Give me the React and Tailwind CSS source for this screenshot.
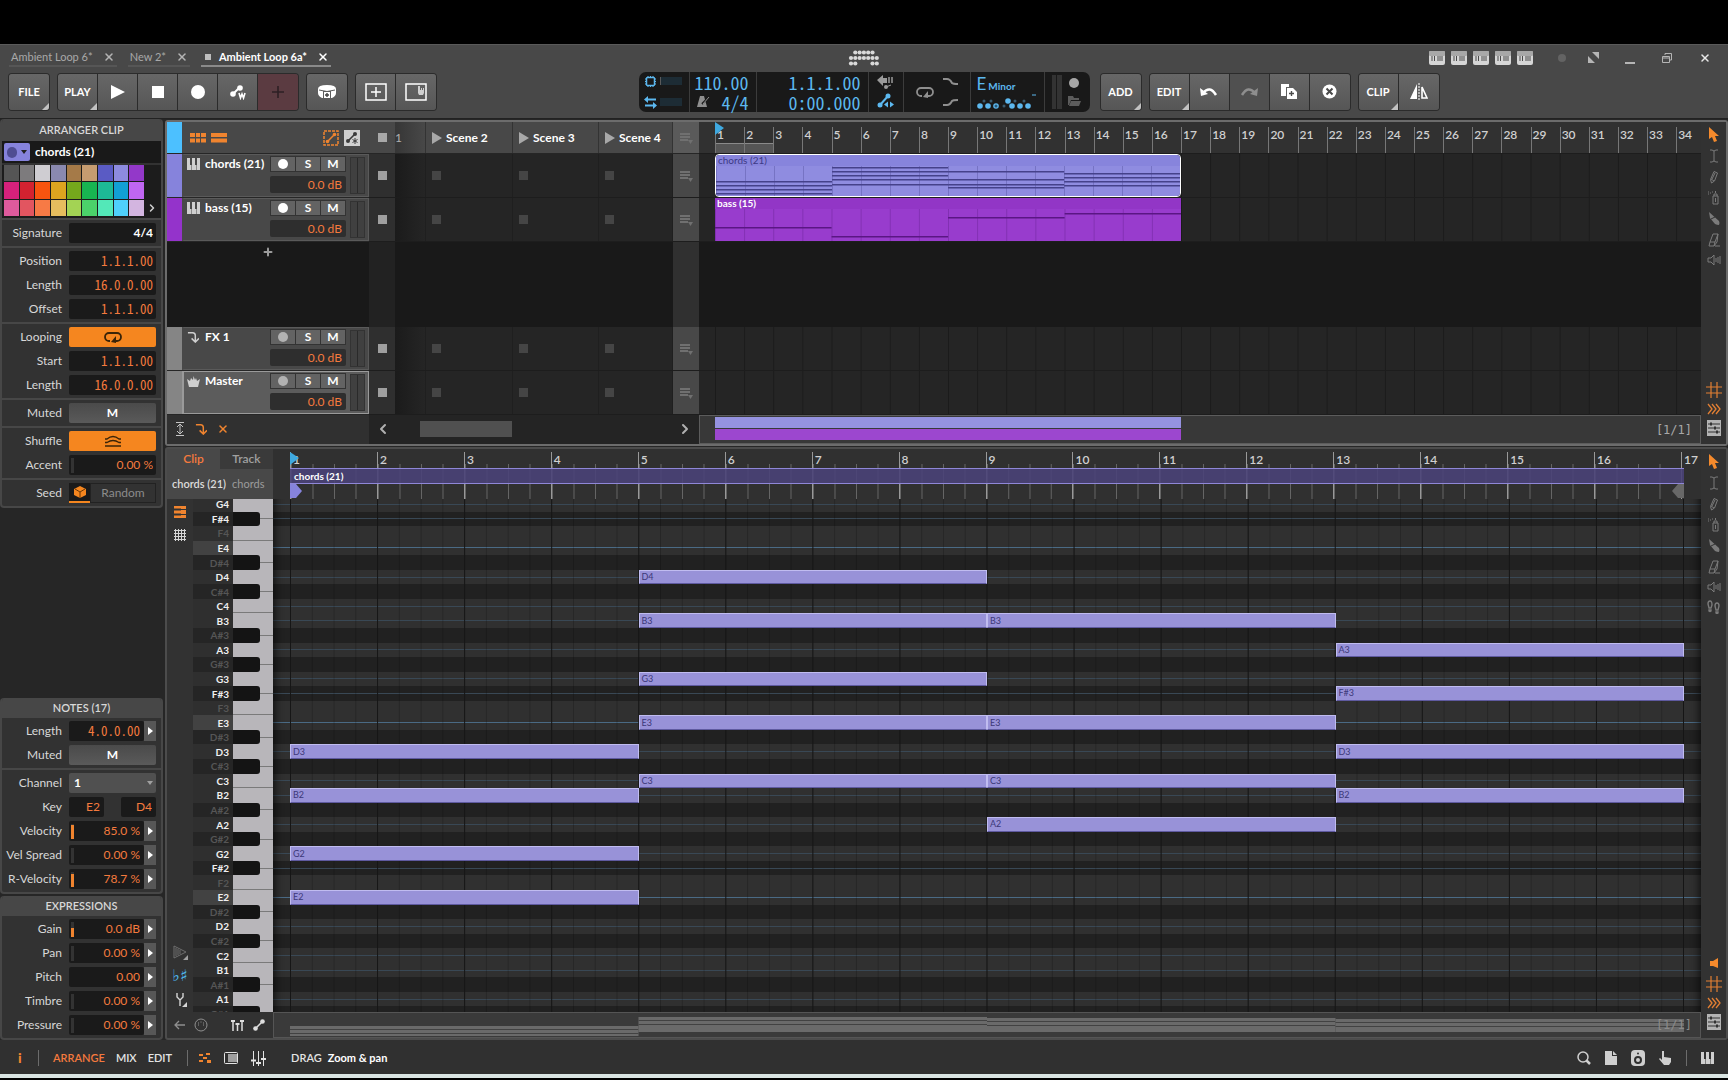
import React from "react";
import clsx from "clsx";
import { LuPlus, LuX, LuChevronLeft, LuChevronRight } from "react-icons/lu";

const VISIBLE_BARS = 33.84;
const BAR = 100 / VISIBLE_BARS;
const MONO = "font-['Noto_Sans_Mono_CJK_SC','Noto_Sans_CJK_SC',sans-serif] [font-feature-settings:'hwid']";

const PALETTE = [
  "#555555", "#7d7b7d", "#cfcdd2", "#8a89b0", "#a57a48", "#c69c70", "#5a5bc4", "#8d8bdf", "#9338c9",
  "#d6217b", "#d32230", "#f7540f", "#dca41f", "#75a81c", "#18b551", "#1dba96", "#12a0d4", "#c066f2",
  "#de5a9c", "#e25560", "#f77a45", "#e6bd5e", "#a3d354", "#4bd26a", "#53e8b8", "#4fd0fb", "#d3b5e0",
];

const KEYS = [
  "G4", "F#4", "F4", "E4", "D#4", "D4", "C#4", "C4", "B3", "A#3", "A3", "G#3",
  "G3", "F#3", "F3", "E3", "D#3", "D3", "C#3", "C3", "B2", "A#2", "A2", "G#2",
  "G2", "F#2", "F2", "E2", "D#2", "D2", "C#2", "C2", "B1", "A#1", "A1", "G#1",
];
const SCALE = ["E", "F#", "G", "A", "B", "C", "D"];

const NOTES = [
  ["D3", 1], ["B2", 1], ["G2", 1], ["E2", 1],
  ["D4", 5], ["B3", 5], ["G3", 5], ["E3", 5], ["C3", 5],
  ["B3", 9], ["E3", 9], ["C3", 9], ["A2", 9],
  ["A3", 13], ["F#3", 13], ["D3", 13], ["B2", 13],
];

const CHORD_LINES = [
  [15, 19, 23, 27],
  [1, 5, 9, 13, 18],
  [5, 13, 18, 21],
  [7, 11, 15, 19],
];
const BASS_LINES = [[18], [27], [8], [4]];

/* ---------- icons ---------- */

const Icon = ({ w = 16, h = 16, className, children }) => (
  <svg
    width={w}
    height={h}
    viewBox={`0 0 ${w} ${h}`}
    fill="none"
    stroke="currentColor"
    className={clsx("shrink-0", className)}
    aria-hidden="true"
  >
    {children}
  </svg>
);

const LoopIcon = ({ className }) => (
  <Icon w={18} h={12} className={className}>
    <path d="M6 10H5a4 4 0 0 1-4-4 4 4 0 0 1 4-4h8a4 4 0 0 1 4 4 4 4 0 0 1-4 4h-2" strokeWidth="1.800" />
    <path d="M12 5v7L7 11z" fill="currentColor" stroke="none" />
  </Icon>
);

const PianoIcon = ({ className }) => (
  <Icon w={13} h={12} className={className}>
    <path d="M0 0h3v7h1v5H0zM5 7h0V0h3v7h1v5H4.500V7zM10 0h3v12H9.500V7h.5z" fill="currentColor" stroke="none" />
  </Icon>
);

const PointerIcon = () => (
  <Icon w={12} h={15} className="text-[#f58a2c]">
    <path d="M1 0v12l3-2 2 5 3-1-2-5h4z" fill="currentColor" stroke="none" />
  </Icon>
);
const BeamIcon = () => (
  <Icon w={10} h={14}>
    <path d="M1 1h2l2 1 2-1h2M5 2v10M1 13h2l2-1 2 1h2" />
  </Icon>
);
const PencilIcon = () => (
  <Icon w={12} h={14}>
    <path d="M6 1.500l3.500 1.500-3 8-3 2-1-3.500zM3 9l3 2M7 3l-3 6" />
  </Icon>
);
const SprayIcon = () => (
  <Icon w={14} h={14}>
    <path d="M6 5h5v8H6zM7 5V3h3v2M8.500 7v4M8.500 2V0" />
    <path d="M1 1h1M3 2h1M1 3h1M5 1h1" />
  </Icon>
);
const KnifeIcon = () => (
  <Icon w={12} h={14}>
    <path d="M1 0l10 9q1 2 0 4-2 0-4-1L2 6z" fill="currentColor" stroke="none" />
    <path d="M3 7l4-2" stroke="#323232" />
  </Icon>
);
const EraserIcon = () => (
  <Icon w={12} h={14}>
    <path d="M5 1h5l-1 8-3 4H1l1-4zM2 9h5l3-8M7 9l-1 4M7 13h5" />
  </Icon>
);
const SpeakerIcon = () => (
  <Icon w={14} h={12}>
    <path d="M1 4h3l3-3v10L4 8H1z" />
    <path d="M9 4v4M11 3v6M13 2v8" />
  </Icon>
);
const FeetIcon = () => (
  <Icon w={13} h={14}>
    <path d="M1 4q0-3 2-3t2 4l-1 3H2zM2 10h2v1q-1 1-2 0zM8 6q0-3 2-3t2 3l-1 4H9zM9 12h2v1q-1 1-2 0z" strokeWidth="1.400" />
  </Icon>
);
const GridIcon = () => (
  <Icon w={16} h={16} className="text-[#e27f33]">
    <path d="M5 0v16M11 0v16M0 5h16M0 11h16" strokeWidth="1.200" />
  </Icon>
);
const ChevronsIcon = () => (
  <Icon w={14} h={12} className="text-[#e27f33]">
    <path d="M1 1l4 5-4 5M5 1l4 5-4 5M9 1l4 5-4 5" strokeWidth="1.300" />
  </Icon>
);
const MixIcon = () => (
  <Icon w={16} h={16} className="text-[#b4b4b4]">
    <path d="M1 0h14v16H1z" fill="currentColor" stroke="none" />
    <path d="M2 4h12M2 8h12M2 12h12" stroke="#333" />
    <path d="M5 2.500v3M9 6.500v3M11 10.500v3" stroke="#333" strokeWidth="2" />
  </Icon>
);
const SceneMenuIcon = () => (
  <Icon w={14} h={12} className="text-[#707070]">
    <path d="M1 2h10M1 5h10M1 8h8" strokeWidth="2" />
    <path d="M9 8h5l-2.500 4z" fill="currentColor" stroke="none" />
  </Icon>
);
const ReturnIcon = ({ className }) => (
  <Icon w={13} h={13} className={className}>
    <path d="M1 2h5q3 0 3 3v6M5 8l4 4 4-4" strokeWidth="1.600" />
  </Icon>
);
const CrownIcon = ({ className }) => (
  <Icon w={13} h={11} className={className}>
    <path d="M0 3l3 2 1-3 2 2 .5-4L8 4l1-2 1 3 3-2-2 8H2z" fill="currentColor" stroke="none" />
  </Icon>
);
const LogoIcon = () => {
  const dots = [[1, 2, 3, 4, 5], [0, 1, 2, 3, 4, 5, 6], [0, 1, 5, 6]];
  return (
    <Icon w={32} h={16}>
      {dots.map((r, y) =>
        r.map((x) => <circle key={`${x}-${y}`} cx={3 + x * 4.3} cy={2.500 + y * 5.500} r="2.100" fill="#d9d9d9" stroke="none" />)
      )}
    </Icon>
  );
};

/* ---------- header ---------- */

const ProjectTab = ({ title, active }) => (
  <div
    className={clsx(
      "flex h-[19px] items-center gap-[10px] border-b-2 px-[2px] text-[11px]",
      active ? "border-[#8a8a8a] font-bold text-white" : "border-[#565656] text-[#a8a8a8]"
    )}
  >
    <button className="flex items-center gap-2">
      {active && <span className="ml-[2px] h-[6px] w-[6px] bg-[#bdbdbd]" />}
      {title}
    </button>
    <button aria-label={`Close ${title}`}>
      <LuX className={clsx("h-3 w-3", active ? "text-white" : "text-[#b4b4b4]")} strokeWidth={3} />
    </button>
  </div>
);

const ToolGroup = ({ children }) => (
  <div className="flex h-[36px] divide-x divide-[#2b2b2b] overflow-hidden rounded-[3px] ring-1 ring-[#2b2b2b]">
    {children}
  </div>
);

const ToolButton = ({ label, menu, className, children }) => (
  <button
    aria-label={label}
    className={clsx(
      "relative flex w-10 items-center justify-center text-[11px] font-bold",
      className || "bg-linear-to-b from-[#676767] to-[#565656] text-white"
    )}
  >
    {children}
    {menu && (
      <span className="absolute right-0 bottom-0 border-b-[7px] border-l-[7px] border-b-[#c2c2c2] border-l-transparent" />
    )}
  </button>
);

const Lcd = () => (
  <div className="flex h-10 w-[451px] divide-x divide-[#3c3c3c] rounded-[7px] bg-[#191919] text-[#5cb8ef]">
    <div className="grid w-[51px] grid-cols-[12px_22px] content-center gap-x-1 gap-y-2 pl-[5px]">
      <Icon w={13} h={13}>
        <rect x="2.500" y="2.500" width="8" height="8" rx="1" strokeWidth="1.500" />
        <path d="M1 4h1M1 6.500h1M1 9h1M11 4h1M11 6.500h1M11 9h1M4 1v1M6.500 1v1M9 1v1M4 11v1M6.500 11v1M9 11v1" />
      </Icon>
      <span className="h-2 self-center border-l border-[#5a5a5a] bg-[#1d2c35]" />
      <Icon w={13} h={13}>
        <path d="M3 3.500h9M1 9.500h9" strokeWidth="1.800" />
        <path d="M0 3.500L4 0v7zM13 9.500L9 6v7z" fill="currentColor" stroke="none" />
      </Icon>
      <span className="h-2 self-center bg-[#1d2c35]" />
    </div>
    <div className="flex w-[67px] flex-col items-end justify-center pr-[7px]">
      <span className={clsx(MONO, "text-[18px] leading-5")}>110.00</span>
      <span className="flex items-center gap-3">
        <Icon w={14} h={11} className="text-[#8f8f8f]">
          <path d="M4 0h4l3 11H1z" fill="currentColor" stroke="none" />
          <path d="M6 8l7-7" stroke="#191919" strokeWidth="2" />
          <path d="M7 8l6-7" />
        </Icon>
        <span className={clsx(MONO, "text-[18px] leading-5")}>4/4</span>
      </span>
    </div>
    <div className={clsx(MONO, "flex w-[112px] flex-col items-end justify-center pr-[7px] text-[18px] leading-5")}>
      <span>1.1.1.00</span>
      <span>0:00.000</span>
    </div>
    <div className="flex w-[35px] flex-col items-center justify-center gap-1">
      <Icon w={17} h={14} className="text-[#9a9a9a]">
        <path d="M0 5l6-5v3h4v5H6v3z" fill="currentColor" stroke="none" />
        <path d="M12 2v6M15 2v6" strokeWidth="1.500" />
        <circle cx="9" cy="12" r="2" fill="currentColor" stroke="none" />
        <path d="M9 12l5-2" />
      </Icon>
      <Icon w={17} h={15}>
        <path d="M3 12l8-9" strokeWidth="2" />
        <circle cx="3" cy="12" r="2.500" fill="currentColor" stroke="none" />
        <circle cx="11" cy="3" r="2.500" fill="currentColor" stroke="none" />
        <path d="M7 11.500l4-3v6zM17 11.500l-4-3v6z" fill="currentColor" stroke="none" />
      </Icon>
    </div>
    <div className="flex w-[67px] items-center justify-center gap-[9px] text-[#8f8f8f]">
      <LoopIcon />
      <div className="flex flex-col gap-[10px]">
        <Icon w={15} h={10}>
          <path d="M0 2h4q3 0 5 4 1 1 6 1" strokeWidth="2" />
        </Icon>
        <Icon w={15} h={10}>
          <path d="M0 8h4q3 0 5-4 1-1 6-1" strokeWidth="2" />
        </Icon>
      </div>
    </div>
    <div className="flex w-[74px] flex-col pt-1 pl-[6px]">
      <div className="flex items-baseline gap-[2px] leading-4">
        <span className="text-[17px]">E</span>
        <span className="text-[10px] font-bold">Minor</span>
      </div>
      <Icon w={62} h={18}>
        {[3, 11, 19, 35, 43, 51].map((x) => (
          <circle key={x} cx={x} cy="12" r="2.800" fill="currentColor" stroke="none" />
        ))}
        <circle cx="19" cy="12" r="1.500" fill="#2a5877" stroke="none" />
        <circle cx="31" cy="7" r="2.800" fill="currentColor" stroke="none" />
        {[7, 14, 38, 47].map((x) => (
          <circle key={x} cx={x} cy="7" r="1.500" fill="#3a5a6e" stroke="none" />
        ))}
        <circle cx="27" cy="12" r="1.500" fill="#3a5a6e" stroke="none" />
        <path d="M55 1h4" />
      </Icon>
    </div>
    <div className="flex flex-1 items-center gap-[5px] pl-[7px]">
      <span className="flex h-[34px] w-[10px] gap-px bg-[#191919]">
        <span className="flex-1 bg-[#333]" />
        <span className="flex-1 bg-[#333]" />
      </span>
      <span className="flex flex-col items-center gap-2">
        <span className="h-[10px] w-[10px] rounded-full bg-[#a6a6a6]" />
        <Icon w={14} h={10} className="text-[#5c5c5c]">
          <path d="M1 0h5l1 2h5v2H4l-2 5H1zM4 5h10l-2 5H2z" fill="currentColor" stroke="none" />
        </Icon>
      </span>
    </div>
  </div>
);

const Header = () => (
  <header className="flex h-[75px] flex-col border-b border-[#222] bg-[#484848]">
    <div className="grid h-[26px] grid-cols-[1fr_auto_1fr] items-center border-t border-[#5a5a5a]">
      <div className="flex gap-[11px] pl-[9px]">
        <ProjectTab title="Ambient Loop 6*" />
        <ProjectTab title="New 2*" />
        <ProjectTab title="Ambient Loop 6a*" active />
      </div>
      <LogoIcon />
      <div className="flex items-center justify-end pr-[17px]">
        <div className="mr-[25px] flex gap-[6px]">
          {[1, 2, 3, 4, 5].map((n) => (
            <Icon key={n} w={16} h={14}>
              <rect width="16" height="14" rx="2" fill="#d6d6d6" stroke="none" />
              <rect width="16" height="5" rx="1" fill="#a8a8a8" stroke="none" />
              <path d="M3 5v5M5.500 5v5M9 5v5M11 5v5M13 5v5" stroke="#4a4a4a" />
            </Icon>
          ))}
        </div>
        <span className="mr-[22px] h-2 w-2 rounded-full bg-[#636363]" />
        <button aria-label="Full screen" className="mr-[26px]">
          <Icon w={11} h={11} className="text-[#b5b5b5]">
            <path d="M0 4v7h7zM11 7V0H4z" fill="currentColor" stroke="none" />
          </Icon>
        </button>
        <button aria-label="Minimize" className="mr-[27px] h-3 w-[10px] border-b-2 border-[#b5b5b5]" />
        <button aria-label="Restore" className="mr-[27px]">
          <Icon w={10} h={10} className="text-[#b5b5b5]">
            <path d="M3 2V.5h6.500V7H8M.5 3.500h7v6h-7zM.5 5h7" />
          </Icon>
        </button>
        <button aria-label="Close">
          <LuX className="h-3 w-3 text-[#e8e8e8]" strokeWidth={3} />
        </button>
      </div>
    </div>
    <div className="grid flex-1 grid-cols-[1fr_auto_1fr] items-center pb-[5px]">
      <div className="flex gap-[9px] pl-[9px]">
        <ToolGroup>
          <ToolButton menu>FILE</ToolButton>
        </ToolGroup>
        <ToolGroup>
          <ToolButton menu>PLAY</ToolButton>
          <ToolButton label="Start">
            <Icon w={14} h={14}>
              <path d="M0 0l14 7-14 7z" fill="currentColor" stroke="none" />
            </Icon>
          </ToolButton>
          <ToolButton label="Stop">
            <span className="h-3 w-3 bg-white" />
          </ToolButton>
          <ToolButton label="Record">
            <span className="h-[14px] w-[14px] rounded-full bg-white" />
          </ToolButton>
          <ToolButton label="Automation write">
            <Icon w={16} h={16}>
              <path d="M3 10l6-6" strokeWidth="2" />
              <circle cx="3" cy="10" r="2.800" fill="currentColor" stroke="none" />
              <circle cx="10" cy="4" r="2.800" fill="currentColor" stroke="none" />
              <path d="M9 9l1.500 5 1.500-4 1.500 4L15 9" strokeWidth="1.600" />
            </Icon>
          </ToolButton>
          <ToolButton label="Overdub" className="bg-[#5b3b41] text-[#2e2024]">
            <Icon w={12} h={12}>
              <path d="M6 0v12M0 6h12" strokeWidth="1.600" />
            </Icon>
          </ToolButton>
        </ToolGroup>
        <ToolGroup>
          <ToolButton label="Capture">
            <Icon w={18} h={16}>
              <path d="M0 5q0-4 9-4t9 4v4q0 3-4 5H4q-4-2-4-5z" fill="currentColor" stroke="none" />
              <path d="M1 6q8 3 16 0" stroke="#5c5c5c" />
              <rect x="5.500" y="7.500" width="7" height="7" fill="#fff" stroke="#5c5c5c" />
              <path d="M9 9v4M7 11h4" stroke="#444" strokeWidth="1.400" />
            </Icon>
          </ToolButton>
        </ToolGroup>
        <ToolGroup>
          <ToolButton label="Add panel">
            <Icon w={22} h={18}>
              <path d="M1 1h20v16H1zM11 4v10M6 9h10" strokeWidth="1.500" />
            </Icon>
          </ToolButton>
          <ToolButton label="Touch panel">
            <Icon w={22} h={18}>
              <path d="M1 1h20v16H1z" strokeWidth="1.500" />
              <path d="M13 3h2v4h1V5h1v2h1V5h1v5l-1 2h-4l-1-2z" fill="#cfcfcf" stroke="none" />
            </Icon>
          </ToolButton>
        </ToolGroup>
      </div>
      <Lcd />
      <div className="flex gap-[9px] pl-[11px]">
        <ToolGroup>
          <ToolButton menu>ADD</ToolButton>
        </ToolGroup>
        <ToolGroup>
          <ToolButton menu>EDIT</ToolButton>
          <ToolButton label="Undo">
            <Icon w={18} h={12}>
              <path d="M3 7q7-8 13 2" strokeWidth="2.500" />
              <path d="M0 2l1 8 7-2z" fill="currentColor" stroke="none" />
            </Icon>
          </ToolButton>
          <ToolButton label="Redo" className="bg-[#505050] text-[#8e8e8e]">
            <Icon w={18} h={12}>
              <path d="M15 7Q8-1 2 9" strokeWidth="2.500" />
              <path d="M18 2l-1 8-7-2z" fill="currentColor" stroke="none" />
            </Icon>
          </ToolButton>
          <ToolButton label="Duplicate">
            <Icon w={16} h={15}>
              <path d="M0 0h8v3H5v9H0z" fill="currentColor" stroke="none" />
              <path d="M6 4h6l4 4v7H6z" fill="currentColor" stroke="none" />
              <path d="M10.500 7v5M8 9.500h5" stroke="#4a4a4a" strokeWidth="1.400" />
            </Icon>
          </ToolButton>
          <ToolButton label="Delete">
            <Icon w={15} h={15}>
              <circle cx="7.500" cy="7.500" r="7" fill="currentColor" stroke="none" />
              <path d="M4.500 4.500l6 6M10.500 4.500l-6 6" stroke="#4a4a4a" strokeWidth="2" />
            </Icon>
          </ToolButton>
        </ToolGroup>
        <ToolGroup>
          <ToolButton menu>CLIP</ToolButton>
          <ToolButton label="Reverse">
            <Icon w={18} h={17}>
              <path d="M7 1v15H0z" fill="currentColor" stroke="none" />
              <path d="M9 0v17" strokeDasharray="2 1" />
              <path d="M12 4v11h5z" strokeWidth="1.600" />
            </Icon>
          </ToolButton>
        </ToolGroup>
      </div>
    </div>
  </header>
);

/* ---------- inspector ---------- */

const Panel = ({ title, small, className, children }) => (
  <section className={clsx("overflow-hidden rounded-[4px] border-x-2 border-b-2 border-[#474747] bg-[#323232]", className)}>
    <h2
      className={clsx(
        "flex items-center justify-center bg-[#474747] text-[11px] font-semibold text-[#d8d8d8]",
        small ? "h-5" : "h-[22px]"
      )}
    >
      {title}
    </h2>
    {children}
  </section>
);

const Section = ({ first, children }) => (
  <div className={clsx("flex flex-col gap-1 py-[3px] pr-[5px] pl-[3px]", !first && "border-t-2 border-[#474747]")}>{children}</div>
);

const Row = ({ label, htmlFor, children }) => (
  <div className="flex h-5 items-center gap-[7px]">
    <label htmlFor={htmlFor} className="flex-1 text-right text-[12px] whitespace-nowrap text-[#d8d8d8]">
      {label}
    </label>
    <div className="flex h-5 w-[87px] items-stretch">{children}</div>
  </div>
);

// bar: fill height of the little level bar, in percent
const Field = ({ id, label, value, mono, bar, arrow, white }) => (
  <Row label={label} htmlFor={id}>
    <div className="flex min-w-0 flex-1 items-center rounded-[2px] bg-[#1a1a1a]">
      {bar !== undefined && (
        <span className="ml-[2px] flex h-[15px] w-[3px] shrink-0 items-end bg-[#333]">
          <span className="w-full bg-[#f0842f]" style={{ height: `${bar}%` }} />
        </span>
      )}
      <input
        id={id}
        defaultValue={value}
        className={clsx(
          "w-full min-w-0 bg-transparent text-right outline-none",
          white ? "font-bold text-white" : "text-[#f57a3e]",
          mono ? MONO : "",
          mono ? "text-[13px]" : "text-[12px]",
          arrow ? "pr-1" : "pr-[3px]"
        )}
      />
    </div>
    {arrow && (
      <button aria-label={`${label} options`} className="flex w-3 items-center justify-center bg-[#575757]">
        <span className="border-y-4 border-l-[5px] border-y-transparent border-l-white" />
      </button>
    )}
  </Row>
);

const MuteRow = ({ id }) => (
  <Row label="Muted" htmlFor={id}>
    <button id={id} className="flex-1 rounded-[2px] bg-linear-to-b from-[#4a4a4a] to-[#5a5a5a] text-[12px] font-bold text-white">
      M
    </button>
  </Row>
);

const Inspector = () => (
  <aside className="flex w-[163px] shrink-0 flex-col bg-[#262626]">
    <Panel title="ARRANGER CLIP">
      <div className="flex h-[22px] items-center gap-[5px] bg-[#191919] px-[2px]">
        <button aria-label="Clip color" className="flex h-[18px] w-[26px] items-center justify-center gap-1 rounded-[2px] bg-[#8683dc]">
          <span className="h-[11px] w-[10px] rounded-full bg-[#4f4d93]" />
          <span className="border-x-[3px] border-t-4 border-x-transparent border-t-[#222]" />
        </button>
        <input aria-label="Clip name" defaultValue="chords (21)" className="w-24 bg-transparent text-[12px] font-bold text-white outline-none" />
      </div>
      <div className="mt-[2px] flex h-[53px] items-end bg-[#1c1c1c] pl-[2px]">
        <div className="grid h-full w-[140px] grid-cols-9 grid-rows-3 gap-px pb-[2px]">
          {PALETTE.map((c) => (
            <button key={c} aria-label={c} style={{ backgroundColor: c }} />
          ))}
        </div>
        <LuChevronRight className="mb-1 h-3 w-4 text-[#d0d0d0]" strokeWidth={3} />
      </div>
      <Section>
        <Field id="sig" label="Signature" value="4/4" white />
      </Section>
      <Section>
        <Field id="pos" label="Position" value="1.1.1.00" mono />
        <Field id="len" label="Length" value="16.0.0.00" mono />
        <Field id="off" label="Offset" value="1.1.1.00" mono />
      </Section>
      <Section>
        <Row label="Looping" htmlFor="looping">
          <button id="looping" className="flex flex-1 items-center justify-center rounded-[2px] bg-[#f5861f] text-[#3b2408]">
            <LoopIcon />
          </button>
        </Row>
        <Field id="lstart" label="Start" value="1.1.1.00" mono />
        <Field id="llen" label="Length" value="16.0.0.00" mono />
      </Section>
      <Section>
        <MuteRow id="clipmute" />
      </Section>
      <Section>
        <Row label="Shuffle" htmlFor="shuffle">
          <button id="shuffle" className="flex flex-1 items-center justify-center rounded-[2px] bg-[#f5861f] text-[#3b2408]">
            <Icon w={16} h={12}>
              <path d="M0 4h2q6-5 12 0h2M0 7.500h2q6-4 12 0h2M0 11h16" strokeWidth="1.300" />
            </Icon>
          </button>
        </Row>
        <Field id="accent" label="Accent" value="0.00 %" bar={0} />
      </Section>
      <Section>
        <Row label="Seed" htmlFor="seed">
          <button id="seed" aria-label="Seed" className="flex w-[21px] items-center justify-center border-b-2 border-[#f5861f] bg-[#1a1a1a]">
            <Icon w={12} h={12} className="text-[#f5861f]">
              <path d="M6 0l6 3v6l-6 3-6-3V3z" fill="currentColor" stroke="none" />
              <path d="M1 3l5 3 5-3M6 6v6" stroke="#6b3706" />
            </Icon>
          </button>
          <button className="flex-1 border border-[#222] text-[12px] text-[#8c8c8c]">Random</button>
        </Row>
      </Section>
    </Panel>

    <div className="flex-1" />

    <Panel title="NOTES (17)" small>
      <Section first>
        <Field id="nlen" label="Length" value="4.0.0.00" mono arrow />
        <MuteRow id="notemute" />
      </Section>
      <Section>
        <Row label="Channel" htmlFor="channel">
          <div className="relative flex flex-1">
            <select id="channel" className="flex-1 appearance-none rounded-[2px] bg-[#505050] pl-[5px] text-[12px] font-bold text-white">
              <option>1</option>
            </select>
            <span className="pointer-events-none absolute top-2 right-[3px] border-x-[3px] border-t-4 border-x-transparent border-t-[#a0a0a0]" />
          </div>
        </Row>
        <Row label="Key" htmlFor="keylo">
          <input id="keylo" defaultValue="E2" className="w-[35px] rounded-[2px] bg-[#1a1a1a] pr-1 text-right text-[12px] text-[#f57a3e]" />
          <span className="flex-1" />
          <input aria-label="Highest key" defaultValue="D4" className="w-[35px] rounded-[2px] bg-[#1a1a1a] pr-1 text-right text-[12px] text-[#f57a3e]" />
        </Row>
        <Field id="vel" label="Velocity" value="85.0 %" bar={90} arrow />
        <Field id="vspr" label="Vel Spread" value="0.00 %" bar={0} arrow />
        <Field id="rvel" label="R-Velocity" value="78.7 %" bar={85} arrow />
      </Section>
    </Panel>
    <Panel title="EXPRESSIONS" small className="mt-[2px]">
      <Section first>
        <Field id="gain" label="Gain" value="0.0 dB" bar={60} arrow />
        <Field id="pan" label="Pan" value="0.00 %" bar={0} arrow />
        <Field id="pitch" label="Pitch" value="0.00" arrow />
        <Field id="timbre" label="Timbre" value="0.00 %" bar={0} arrow />
        <Field id="pressure" label="Pressure" value="0.00 %" bar={0} arrow />
      </Section>
    </Panel>
  </aside>
);

/* ---------- arranger ---------- */

const TrackHeader = ({ name, color, icon, armed, selected }) => (
  <div className="flex h-11 w-[202px] border-b border-[#262626]">
    <span className="w-[15px]" style={{ backgroundColor: color }} />
    <div
      className={clsx(
        "flex flex-1 border border-l-2 pl-[3px]",
        selected ? "border-[#9a9a9a] bg-[#5c5c5c]" : "border-[#5a5a5a] border-l-[#484848] bg-[#484848]"
      )}
    >
      <div className="flex w-[83px] items-start gap-[5px] pt-px">
        <span className="flex h-4 w-[13px] items-center text-[#cfcfcf]">{icon}</span>
        <span className="text-[12px] leading-4 font-bold whitespace-nowrap text-white">{name}</span>
      </div>
      <div className="flex w-[76px] flex-col gap-1 pt-px">
        <div className="flex h-4 divide-x divide-[#333] border border-[#333]">
          <button aria-label={`Arm ${name}`} className="flex flex-1 items-center justify-center bg-[#636363]">
            <span className={clsx("h-[10px] w-[10px] rounded-full", armed ? "bg-white" : "bg-[#b2b2b2]")} />
          </button>
          <button aria-label={`Solo ${name}`} className="flex-1 bg-[#636363] text-[12px] leading-[14px] font-bold text-white">S</button>
          <button aria-label={`Mute ${name}`} className="flex-1 bg-[#636363] text-[12px] leading-[14px] font-bold text-white">M</button>
        </div>
        <div className="h-[17px] rounded-[2px] bg-[#2e2e2e] pr-1 text-right text-[12px] leading-[17px] text-[#f57a3e]">0.0 dB</div>
      </div>
      <div className="my-[2px] ml-1 flex w-[15px] gap-px border border-[#333] bg-[#2a2a2a]">
        <span className="flex-1 bg-[#404040]" />
        <span className="flex-1 bg-[#404040]" />
      </div>
    </div>
  </div>
);

const COLS = "grid grid-cols-[26px_31px_87px_86px_74px_26px]";

const Slot = () => (
  <div className="flex items-center border-r border-[#1f1f1f] bg-[#252525] pl-[6px]">
    <button aria-label="Stop slot" className="h-[9px] w-[9px] bg-[#454545]" />
  </div>
);

const SlotRow = () => (
  <div className={clsx(COLS, "h-11 border-b border-[#1d1d1d]")}>
    <div className="flex items-center justify-center bg-[#2f2f2f]">
      <button aria-label="Stop track" className="h-[9px] w-[9px] bg-[#9f9f9f]" />
    </div>
    <div className="border-r border-[#1f1f1f] bg-linear-to-r from-[#1b1b1b] to-[#252525]" />
    <Slot />
    <Slot />
    <Slot />
    <div className="flex items-center justify-center bg-[#484848]">
      <SceneMenuIcon />
    </div>
  </div>
);

const SceneHead = ({ name }) => (
  <div className="flex items-center gap-1 border-r border-[#333] bg-[#484848] pl-[6px]">
    <span className="border-y-[6px] border-l-[10px] border-y-transparent border-l-[#a8a8a8]" />
    <span className="text-[12px] font-bold text-white">{name}</span>
  </div>
);

const Clip = ({ name, lines, head, body, line, outline, dark }) => (
  <div
    className={clsx("flex flex-col overflow-hidden [grid-area:1/1]", outline && "rounded-[4px] border border-white")}
    style={{ width: `${16 * BAR}%` }}
  >
    <div className={clsx("h-[11px] pl-[2px] text-[10px] leading-[11px]", head, dark ? "text-[#3d3a86]" : "font-bold text-white")}>{name}</div>
    <div className={clsx("flex-1 bg-[length:6.25%_100%]", body)}>
      <svg className="block h-8 w-full" viewBox="0 0 16 32" preserveAspectRatio="none">
        {lines.map((seg, i) =>
          seg.map((y) => <rect key={`${i}-${y}`} x={i * 4} y={y} width="4" height="1.500" fill={line} />)
        )}
      </svg>
    </div>
  </div>
);

const Lane = ({ children }) => (
  <div className="h-11 overflow-hidden border-b border-[#1d1d1d] bg-[#252525] pl-4">
    <div
      className="grid h-full grid-rows-1 bg-[linear-gradient(to_right,#1b1b1b_1px,transparent_1px)]"
      style={{ backgroundSize: `${BAR}% 100%` }}
    >
      {children}
    </div>
  </div>
);

const Tools = ({ extra }) => (
  <div className="flex w-[25px] shrink-0 flex-col items-center bg-[#323232] pt-[5px] text-[#7b7b7b]">
    <div className="flex flex-col items-center gap-[7px]">
      <PointerIcon />
      <BeamIcon />
      <PencilIcon />
      <SprayIcon />
      <KnifeIcon />
      <EraserIcon />
      <SpeakerIcon />
      {extra && <FeetIcon />}
    </div>
    <div className="mt-auto flex flex-col items-center gap-[5px] pb-2">
      {extra && (
        <Icon w={10} h={11} className="mb-[2px] text-[#f58a2c]">
          <path d="M1 3h3l5-3v10L4 8H1z" fill="currentColor" stroke="none" />
        </Icon>
      )}
      <GridIcon />
      <ChevronsIcon />
      <MixIcon />
    </div>
  </div>
);

const PlayMarker = () => (
  <Icon w={9} h={13} className="text-[#3fa9e0]">
    <path d="M0 0l9 6-9 7z" fill="currentColor" stroke="none" />
  </Icon>
);

const Arranger = () => (
  <section className="mt-px flex rounded-[3px] border-2 border-[#6c6c6c] bg-[#191919]">
    <div className="flex w-[202px] shrink-0 flex-col">
      <div className="flex h-8 border-b border-[#262626] bg-[#484848]">
        <span className="w-[15px] bg-[#4cc0ff]" />
        <div className="flex flex-1 items-center gap-[5px] pr-[9px] pl-2">
          <Icon w={16} h={10} className="text-[#f0842f]">
            <path d="M0 0h5v4H0zM6 0h4v4H6zM11 0h5v4h-5zM0 5.500h5v4H0zM6 5.500h4v4H6zM11 5.500h5v4h-5z" fill="currentColor" stroke="none" />
          </Icon>
          <Icon w={16} h={10} className="text-[#f0842f]">
            <path d="M0 0h16v4H0zM0 5.500h16v4H0z" fill="currentColor" stroke="none" />
          </Icon>
          <Icon w={16} h={16} className="ml-auto text-[#f0842f]">
            <rect x="1" y="1" width="14" height="14" strokeWidth="1.500" strokeDasharray="3 1" />
            <path d="M4 12l8-8" strokeWidth="1.600" />
            <circle cx="4.500" cy="11.500" r="1.800" fill="currentColor" stroke="none" />
            <circle cx="11.500" cy="4.500" r="1.800" fill="currentColor" stroke="none" />
          </Icon>
          <Icon w={16} h={16}>
            <rect width="16" height="16" fill="#cfcfcf" stroke="none" />
            <path d="M4 11l7-7" stroke="#3a3a3a" strokeWidth="1.600" />
            <circle cx="4" cy="11" r="2" fill="#3a3a3a" stroke="none" />
            <circle cx="11" cy="4" r="2" fill="#3a3a3a" stroke="none" />
            <path d="M11 8v6M8.500 9.500l5 3M13.500 9.500l-5 3" stroke="#3a3a3a" />
          </Icon>
        </div>
      </div>
      <TrackHeader name="chords (21)" color="#8683dc" icon={<PianoIcon />} armed />
      <TrackHeader name="bass (15)" color="#9433cb" icon={<PianoIcon />} armed />
      <button aria-label="Add track" className="flex h-[85px] items-start justify-center pt-1 text-[#9c9c9c]">
        <LuPlus className="h-3 w-3" strokeWidth={4} />
      </button>
      <TrackHeader name="FX 1" color="#858585" icon={<ReturnIcon className="h-3 w-3" />} />
      <TrackHeader name="Master" color="#858585" icon={<CrownIcon />} selected />
      <div className="flex h-[29px] items-center gap-[10px] bg-[#303030] pb-[2px] pl-2 text-[#f0842f]">
        <Icon w={10} h={14} className="text-[#c4c4c4]">
          <path d="M1 .5h8M1 13.500h8M5 2v10M2 5l3-3 3 3M2 9l3 3 3-3" />
        </Icon>
        <ReturnIcon className="h-3 w-3" />
        <LuX className="h-3 w-3" strokeWidth={3} />
      </div>
    </div>

    <div className="flex w-[330px] shrink-0 flex-col">
      <div className={clsx(COLS, "h-8 border-b border-[#262626]")}>
        <div className="flex items-center justify-center bg-[#484848]">
          <button aria-label="Stop all" className="h-[9px] w-[9px] bg-[#a8a8a8]" />
        </div>
        <div className="flex items-center border-r border-[#333] bg-linear-to-r from-[#363636] to-[#484848] text-[12px] text-[#b0b0b0]">1</div>
        <SceneHead name="Scene 2" />
        <SceneHead name="Scene 3" />
        <SceneHead name="Scene 4" />
        <div className="flex items-center justify-center bg-[#5a5a5a]">
          <SceneMenuIcon />
        </div>
      </div>
      <SlotRow />
      <SlotRow />
      <div className={clsx(COLS, "h-[85px]")}>
        <div className="bg-[#222]" />
        <div className="col-span-4 bg-[#191919]" />
        <div className="bg-[#303030]" />
      </div>
      <SlotRow />
      <SlotRow />
      <div className="flex h-[29px] items-center bg-[#242424] px-1 pb-[2px] text-[#b0b0b0]">
        <button aria-label="Scroll left">
          <LuChevronLeft className="h-4 w-5" strokeWidth={3} />
        </button>
        <div className="flex flex-1 pl-[27px]">
          <span className="h-4 w-[92px] bg-[#505050]" />
        </div>
        <button aria-label="Scroll right">
          <LuChevronRight className="h-4 w-5" strokeWidth={3} />
        </button>
      </div>
    </div>

    <div className="flex min-w-0 flex-1 flex-col">
      <div className="h-8 overflow-hidden border-b border-[#1d1d1d] bg-[#313131] pl-4">
        <div className="grid h-full grid-rows-1">
          <div className="flex items-end [grid-area:1/1]">
            {Array.from({ length: 34 }, (_, i) => (
              <div
                key={i}
                className={clsx(
                  "h-[26px] shrink-0 border-l border-[#777] pl-px text-[12px] leading-4 font-semibold text-[#d0d0d0]",
                  i < 2 && "bg-[linear-gradient(to_top,#555_9px,#8a8a8a_9px,#8a8a8a_10px,transparent_10px)]"
                )}
                style={{ width: `${BAR}%` }}
              >
                {i + 1}
              </div>
            ))}
          </div>
          <div className="[grid-area:1/1]">
            <PlayMarker />
          </div>
        </div>
      </div>
      <Lane>
        <Clip
          name="chords (21)"
          lines={CHORD_LINES}
          head="bg-[#8784dc]"
          body="bg-[#8f8ce0] bg-[linear-gradient(to_right,#7673c4_1px,transparent_1px)]"
          line="#45418a"
          outline
          dark
        />
      </Lane>
      <Lane>
        <Clip
          name="bass (15)"
          lines={BASS_LINES}
          head="bg-[#9236c6]"
          body="bg-[#983ccd] bg-[linear-gradient(to_right,#8230b3_1px,transparent_1px)]"
          line="#5a1684"
        />
      </Lane>
      <div className="h-[85px] bg-[#191919]" />
      <Lane />
      <Lane />
      <div className="grid h-[29px] grid-rows-1 border border-[#5c5c5c] bg-[#383838] pl-[15px]">
        <div className="flex flex-col pt-px pb-[3px] [grid-area:1/1]" style={{ width: `${16 * BAR}%` }}>
          <span className="flex-1 border-b border-[#383838] bg-[#9592e0]" />
          <span className="flex-1 bg-[#9c47cf]" />
        </div>
        <span className="self-center justify-self-end pr-2 font-['DejaVu_Sans_Mono',monospace] text-[12px] text-[#a8a8a8] [grid-area:1/1]">[1/1]</span>
      </div>
    </div>
    <Tools />
  </section>
);

/* ---------- note editor ---------- */

const PianoRow = ({ name }) => {
  const pitch = name.slice(0, -1);
  const black = pitch.includes("#");
  const inScale = SCALE.includes(pitch);
  return (
    <div className="flex">
      <span
        className={clsx(
          "flex w-10 items-center justify-end pr-1 text-[10px] font-bold",
          pitch === "E" ? "bg-[#424242]" : black ? "bg-[#252525]" : "bg-[#2f2f2f]",
          inScale ? "text-[#f0f0f0]" : "text-[#565656]"
        )}
      >
        {name}
      </span>
      <span
        className={clsx(
          "flex flex-1 items-center bg-[#b8b6ba]",
          (pitch === "F" || pitch === "C") && "border-b border-[#7a7a7a]"
        )}
      >
        {black && <span className="h-full w-[27px] rounded-r-[3px] bg-[#141414]" />}
        {black && <span className="h-px flex-1 bg-[#7a7a7a]" />}
      </span>
    </div>
  );
};

const RollRow = ({ name }) => {
  const pitch = name.slice(0, -1);
  const black = pitch.includes("#");
  return (
    <div className={clsx("flex items-center", black ? "bg-[#212121]" : "bg-[#303030]")}>
      {SCALE.includes(pitch) && <span className={clsx("h-px flex-1", pitch === "E" ? "bg-[#4a6a84]" : "bg-[#394855]")} />}
    </div>
  );
};

const Editor = () => (
  <section className="mt-px flex flex-1 rounded-[3px] border-2 border-[#4c4c4c] bg-[#323232]">
    <div className="flex w-[106px] shrink-0 flex-col">
      <div className="flex h-[20px] text-[12px] font-semibold">
        <button className="w-[53px] bg-[#484848] text-[#f57a3e]">Clip</button>
        <button className="flex-1 bg-[#3a3a3a] text-[#a0a0a0]">Track</button>
      </div>
      <div className="flex h-[30px] items-center gap-[6px] bg-[#484848] pl-[5px] text-[11px] whitespace-nowrap">
        <span className="font-semibold text-[#dcdcdc]">chords (21)</span>
        <span className="text-[#9c9c9c]">chords</span>
      </div>
      <div className="flex h-[513px] overflow-hidden">
        <div className="flex w-[26px] flex-col items-center pt-[7px] pb-[5px] text-[#d5d5d5]">
          <Icon w={12} h={12} className="text-[#f0842f]">
            <path d="M0 0h12v12H0V9.500h7v-2H0v-3h7v-2H0z" fill="currentColor" stroke="none" />
            <path d="M7 3.500h5M7 8.500h5" stroke="#323232" />
          </Icon>
          <Icon w={12} h={12} className="mt-[11px]">
            <path d="M1.500 0v12M4.500 0v12M7.500 0v12M10.500 0v12M0 1.500h12M0 4.500h12M0 7.500h12M0 10.500h12" strokeWidth="1" />
          </Icon>
          <Icon w={15} h={15} className="mt-auto text-[#6e6e6e]">
            <path d="M1 1l12 6-12 6zM3 3v8M5 4v6M7 5v4" />
            <path d="M15 10v5h-5z" fill="#a0a0a0" stroke="none" />
          </Icon>
          <span className="mt-2 font-['DejaVu_Sans',sans-serif] text-[16px] leading-4 font-bold text-[#4fb9f0]">♭♯</span>
          <Icon w={14} h={15} className="mt-2">
            <path d="M4 1v4l3 3 3-3V1M7 8v6" strokeWidth="1.400" />
            <path d="M14 10v5H9z" fill="currentColor" stroke="none" />
          </Icon>
        </div>
        <div className="-mt-[2px] grid h-[524px] flex-1 grid-rows-36">
          {KEYS.map((k) => (
            <PianoRow key={k} name={k} />
          ))}
        </div>
      </div>
      <div className="flex flex-1 items-center gap-[9px] pl-[7px] text-[#8f8f8f]">
        <Icon w={11} h={10}>
          <path d="M5 1L1 5l4 4M1 5h10" strokeWidth="1.300" />
        </Icon>
        <Icon w={14} h={14}>
          <circle cx="7" cy="7" r="6" />
          <path d="M4 7h1M9 7h1M4 5h1M9 5h1M6.500 4h1" />
        </Icon>
        <Icon w={13} h={12} className="ml-[14px] text-[#dedede]">
          <path d="M2 3v9M6.500 5v7M11 3v9" strokeWidth="1.500" />
          <path d="M0 2h4M4.500 5h4M9 2h4" strokeWidth="2" />
        </Icon>
        <Icon w={12} h={12} className="text-[#dedede]">
          <path d="M2 10l8-8" strokeWidth="1.600" />
          <circle cx="2.500" cy="9.500" r="2.300" fill="currentColor" stroke="none" />
          <circle cx="9.500" cy="2.500" r="2.300" fill="currentColor" stroke="none" />
        </Icon>
      </div>
    </div>

    <div className="flex min-w-0 flex-1 flex-col">
      <div className="grid h-[50px] grid-rows-1 overflow-hidden bg-[#303030] px-[17px]">
        <div className="flex [grid-area:1/1]">
          {Array.from({ length: 16 }, (_, i) => (
            <div key={i} className="mt-[3px] flex flex-1 flex-col border-l border-[#999]">
              <span className="h-3 pl-[2px] text-[12px] leading-4 font-semibold text-[#d0d0d0]">{i + 1}</span>
              <span className="flex-1 bg-[linear-gradient(to_right,#666_1px,transparent_1px)] bg-[length:25%_100%]" />
            </div>
          ))}
          <div className="mt-[3px] w-0 border-l border-[#999] pl-[2px] text-[12px] leading-4 font-semibold text-[#d0d0d0]">17</div>
        </div>
        <div className="flex flex-col [grid-area:1/1]">
          <div className="h-[19px] pt-[3px]">
            <PlayMarker />
          </div>
          <div className="h-4 border-y border-[#8f87d8] bg-[#4a4278]/90 pl-1 text-[10px] leading-[14px] font-bold text-white">chords (21)</div>
          <div className="flex justify-between">
            <Icon w={12} h={14} className="text-[#8683dc]">
              <path d="M0 0h6l6 7-6 7H0z" fill="currentColor" stroke="none" />
            </Icon>
            <Icon w={12} h={14} className="text-[#686868]">
              <path d="M12 0H6L0 7l6 7h6z" fill="currentColor" stroke="none" />
            </Icon>
          </div>
        </div>
      </div>
      <div className="h-[513px] overflow-hidden">
        <div className="-mt-[2px] grid h-[524px] grid-rows-1">
          <div className="grid grid-rows-36 [grid-area:1/1]">
            {KEYS.map((k) => (
              <RollRow key={k} name={k} />
            ))}
          </div>
          <div className="mx-[17px] border-r border-[#151515] bg-[linear-gradient(to_right,#161616_1px,transparent_1px),linear-gradient(to_right,#0003_1px,transparent_1px)] bg-[length:6.25%_100%,1.5625%_100%] [grid-area:1/1]" />
          <div className="mx-[17px] grid grid-cols-16 grid-rows-36 [grid-area:1/1]">
            {NOTES.map(([name, bar]) => (
              <div
                key={name + bar}
                className="flex min-h-0 items-center overflow-hidden border border-[#c0bcf0] border-b-[#5f5aa0] bg-[#9892d8] pl-[2px] text-[9px] leading-3 text-[#3c3878]"
                style={{ gridRow: KEYS.indexOf(name) + 1, gridColumn: `${bar} / span 4` }}
              >
                {name}
              </div>
            ))}
          </div>
          <div className="shadow-[inset_10px_0_8px_-8px_#000a,inset_-10px_0_8px_-8px_#000a] [grid-area:1/1]" />
        </div>
      </div>
      <div className="grid flex-1 grid-rows-1 border border-[#555] bg-[#3a3a3a] px-4">
        <svg height="22" viewBox="0 0 16 22" preserveAspectRatio="none" className="w-full self-center [grid-area:1/1]">
          {[
            [0, 12, 10],
            [4, 3, 15],
            [8, 4, 14],
            [12, 5, 13],
          ].map(([x, y, h]) => (
            <g key={x}>
              <rect x={x} y={y} width="4" height={h} fill="#6a6a6a" />
              <rect x={x} y={y + 3} width="4" height="1" fill="#424242" />
              <rect x={x} y={y + 7} width="4" height="1" fill="#424242" />
            </g>
          ))}
        </svg>
        <span className="-mr-2 self-center justify-self-end font-['DejaVu_Sans_Mono',monospace] text-[12px] text-[#8a8a8a] [grid-area:1/1]">[1/1]</span>
      </div>
    </div>
    <Tools extra />
  </section>
);

/* ---------- status bar ---------- */

const StatusBar = () => (
  <footer className="flex h-[34px] items-center bg-[#303030] px-[14px] pt-[2px] text-[12px] text-[#e4e4e4]">
    <span className="w-[24px] pl-1 text-[14px] font-black text-[#f0842f]">i</span>
    <span className="h-4 w-px bg-[#6c6c6c]" />
    <nav className="flex gap-[11px] pr-[15px] pl-[14px] text-[11px] font-semibold">
      <button className="text-[#f57a3e]">ARRANGE</button>
      <button>MIX</button>
      <button>EDIT</button>
    </nav>
    <span className="h-4 w-px bg-[#6c6c6c]" />
    <div className="flex items-center gap-[13px] pl-[11px]">
      <Icon w={12} h={12} className="text-[#f0842f]">
        <path d="M0 2h4v2H0zM7 1h4v2H7zM4 5h4v2H4zM0 8h4v2H0zM8 8h4v3H8z" fill="currentColor" stroke="none" />
      </Icon>
      <Icon w={14} h={12}>
        <rect x="0.500" y="0.500" width="13" height="11" rx="1" />
        <rect x="4" y="2" width="9" height="8" fill="#9f9f9f" stroke="none" />
      </Icon>
      <Icon w={15} h={15}>
        <path d="M2.500 0v15M7.500 0v15M12.500 0v15" />
        <path d="M0 9.500h5M5 12h5M10 8h5" strokeWidth="2" />
      </Icon>
    </div>
    <span className="ml-[25px] text-[11px] font-semibold">DRAG</span>
    <span className="ml-[6px] text-[11px] font-bold text-white">Zoom & pan</span>
    <div className="ml-auto flex items-center gap-[14px] text-[#cfcfcf]">
      <Icon w={14} h={14}>
        <circle cx="6" cy="6" r="5" strokeWidth="1.500" />
        <path d="M9.500 9.500L13 13" strokeWidth="2.500" />
      </Icon>
      <Icon w={12} h={14}>
        <path d="M0 0h7v5h5v9H0zM8 0l4 4H8z" fill="currentColor" stroke="none" />
      </Icon>
      <Icon w={14} h={16}>
        <rect width="14" height="16" rx="4" fill="currentColor" stroke="none" />
        <circle cx="7" cy="10" r="3" stroke="#303030" strokeWidth="2" />
        <circle cx="7" cy="3.500" r="1" fill="#303030" stroke="none" />
      </Icon>
      <Icon w={13} h={14}>
        <path d="M3 0h2v6l7 1v4l-2 3H5L0 8l1-1 2 2z" fill="currentColor" stroke="none" />
      </Icon>
      <span className="h-4 w-px bg-[#6c6c6c]" />
      <PianoIcon />
    </div>
  </footer>
);

export default function App() {
  return (
    <div className="flex min-h-screen flex-col bg-black pt-11 pb-[2px] font-['Lato','Noto_Sans',sans-serif] text-[12px] leading-4">
      <Header />
      <main className="flex flex-1 gap-[2px] bg-[#262626]">
        <Inspector />
        <div className="flex min-w-0 flex-1 flex-col">
          <Arranger />
          <Editor />
        </div>
      </main>
      <StatusBar />
      <div className="h-1 bg-[#d9e4e2]" />
    </div>
  );
}
